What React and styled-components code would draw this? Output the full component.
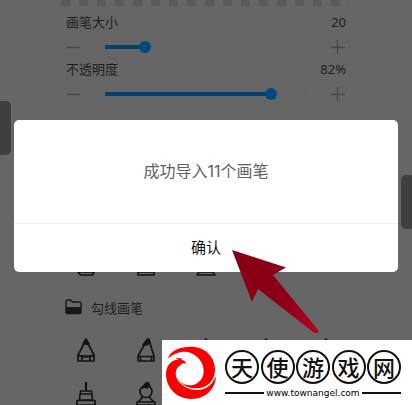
import React, { useState } from "react";
import styled, { createGlobalStyle } from "styled-components";

const GlobalStyle = createGlobalStyle`
  * { box-sizing: border-box; }
  body {
    margin: 0;
    background: #666;
    font-family: "Noto Sans", "Noto Sans CJK SC", sans-serif;
    color: #1e1e1e;
  }
  button { font: inherit; border: 0; padding: 0; background: none; color: inherit; }
`;

const Screen = styled.div`
  position: relative;
  height: 100vh;
  overflow: hidden;
  background: #666;
`;

const Panel = styled.main`
  width: 280px;
  margin: 0 auto;
`;

const PreviewStrip = styled.div`
  height: 6px;
  margin: 0 -4px 7px -5px;
  background: repeating-linear-gradient(90deg, #5b5b5b 0 9px, transparent 9px 18px);
`;

const Setting = styled.section`
  padding-bottom: 5px;
`;

const SettingHead = styled.div`
  display: flex;
  justify-content: space-between;
  height: 18px;
  margin-bottom: 8px;
  font-size: 13px;
  line-height: 18px;
`;

const SettingControls = styled.div`
  display: grid;
  grid-template-columns: 16px 1fr 16px;
  column-gap: 17px;
  align-items: center;
  height: 16px;
`;

const StepButton = styled.button`
  display: flex;
  height: 16px;
  color: #484848;
`;

const Slider = styled.input`
  appearance: none;
  width: 100%;
  height: 12px;
  margin: 0;
  background: linear-gradient(#00416f, #00416f) 6px 50% / calc((100% - 12px) * ${(p) => p.value / 100}) 4px no-repeat,
    linear-gradient(#646464, #646464) 50% 50% / calc(100% - 12px) 4px no-repeat;

  &::-webkit-slider-thumb {
    appearance: none;
    width: 12px;
    height: 12px;
    border-radius: 50%;
    background: #004a80;
  }
`;

const BrushLibrary = styled.section`
  margin: 135px -10px 0;
`;

const BrushRow = styled.div`
  display: grid;
  grid-template-columns: repeat(5, 1fr);
  height: 44px;
`;

const BrushButton = styled.button`
  display: flex;
  align-items: center;
  justify-content: center;
  color: #141414;
`;

const GroupHeader = styled.h2`
  display: flex;
  align-items: center;
  gap: 9px;
  height: 42px;
  margin: 0;
  padding-left: 9px;
  font-size: 13px;
  font-weight: 400;
`;

const SideHandle = styled.button`
  position: absolute;
  top: ${(p) => (p.$side === "left" ? 101 : 175)}px;
  ${(p) => p.$side}: 0;
  width: 11px;
  height: 54px;
  background: #3f3f3f;
  border-radius: ${(p) => (p.$side === "left" ? "0 5px 5px 0" : "5px 0 0 5px")};
`;

const Dialog = styled.div`
  position: absolute;
  top: 120px;
  left: 14px;
  right: 14px;
  border-radius: 5px;
  background: #fff;
  overflow: hidden;
`;

const DialogMessage = styled.p`
  margin: 0;
  padding: 39px 16px 40px;
  border-bottom: 1px solid #f0f0f0;
  text-align: center;
  font-family: Inter, "Noto Sans CJK SC", sans-serif;
  font-size: 16px;
  line-height: 24px;
  color: #626262;
`;

const ConfirmButton = styled.button`
  display: block;
  width: 100%;
  height: 48px;
  padding-bottom: 3px;
  font-size: 15px;
  color: #111;
`;

const Pointer = styled.svg`
  position: absolute;
  top: 248px;
  left: 230px;
`;

const Watermark = styled.a`
  position: absolute;
  right: 0;
  bottom: 0;
  display: flex;
  gap: 5px;
  width: 250px;
  height: 65px;
  padding-top: 1px;
  background: #fff;
  color: #111;
  text-decoration: none;
`;

const SiteInfo = styled.div`
  width: 176px;
  padding-top: 9px;
`;

const SiteName = styled.div`
  display: flex;
  justify-content: space-between;
`;

const Glyph = styled.span`
  width: 34px;
  height: 34px;
  border: 2px solid #111;
  border-radius: 50%;
  text-align: center;
  font-family: "Noto Sans CJK SC", sans-serif;
  font-size: 22px;
  font-weight: 500;
  line-height: 29px;
`;

const SiteUrl = styled.div`
  display: flex;
  align-items: center;
  gap: 2px;
  font-family: "DejaVu Sans", sans-serif;
  font-size: 9px;
  line-height: 18px;
  color: #000;

  &::before, &::after {
    content: "";
    flex: 1;
    height: 2px;
    background: #111;
  }
`;

const StepIcon = ({ plus }) => (
  <svg width="16" height="16" viewBox="0 0 16 16" stroke="currentColor" strokeWidth="1.300" aria-hidden="true">
    <path d={plus ? "M1 8.5H15M7.5 1V15" : "M1 8.5H14"} />
  </svg>
);

const FolderIcon = () => (
  <svg width="17" height="16" viewBox="0 0 17 16" aria-hidden="true">
    <path d="M1 13V2.500Q1 1 2.500 1H5.500L7.500 3H14.500Q16 3 16 4.500V13Q16 14.500 15 14.500H2Q1 14.500 1 13Z" fill="none" stroke="#181818" strokeWidth="1.400" />
    <path d="M1 8H16V13Q16 15 14.500 15H2.500Q1 15 1 13Z" fill="#181818" />
  </svg>
);

const brushShapes = {
  pencil: (
    <>
      <path d="M12 2L4 17V23H20V17ZM4 18H20M8 18V23M16 18V23" />
      <path d="M4 17Q12 21 20 17" />
      <path d="M12 1L9 6.500L11 5.500L13 6.500L15 6Z" fill="currentColor" />
    </>
  ),
  slanted: (
    <>
      <path d="M13 2L4 18V23H20V18L15 2ZM4 18.500H20M6.500 19V23M17.500 19V23" />
      <path d="M13.500 1L9 7L11 6.500L13 7L14 5L16 6L15 1Z" fill="currentColor" />
    </>
  ),
  liner: (
    <>
      <path d="M12 0V9" strokeWidth="2.200" />
      <path d="M6.500 9H17.500V12H6.500ZM6 12L5.500 18H18.500L18 12M3 18.500H21V23H3Z" />
    </>
  ),
  round: (
    <>
      <circle cx="12" cy="9.500" r="6" />
      <path d="M8 14.500V16L4 20H20L16 16V14.500M3 20H21V23H3Z" />
      <path d="M12 1L8 6L11 5L13 6L14 4L16 5L14 0Z" fill="currentColor" />
    </>
  ),
  cup: <path d="M6 3H18L20 20L18.500 23H6.500L4 20ZM4.500 20H19.500" />,
  block: <path d="M6 3H18L20 20V23H4V20ZM4 20H20" />,
  wide: <path d="M8 3H16L19 20L21 23H3L5 20ZM5 20H19" />,
  tip: <path d="M9 3H13L15 20L13 22H9L7 20Z" />,
};

const BrushIcon = ({ shape }) => (
  <svg width="24" height="24" viewBox="0 0 24 24" fill="none" stroke="currentColor" strokeWidth="1.700" strokeLinejoin="round" aria-hidden="true">
    {brushShapes[shape]}
  </svg>
);

const PhoenixLogo = () => (
  <svg width="58" height="62" viewBox="0 0 174 186" fill="#fb0000" aria-hidden="true">
    <path d="M17 52C28 27 55 17 86 17C130 17 159 48 159 86C159 118 136 142 103 142C83 142 63 134 50 119C65 131 82 136 96 131C116 124 126 107 125 87C123 54 93 31 65 32C45 33 31 42 17 52Z" />
    <path d="M40 50C48 52 55 50 61 53L58 57C66 57 70 61 73 69C66 65 60 66 57 71C46 77 41 86 41 99C43 127 76 149 108 147C136 145 151 130 162 106C160 145 130 174 88 174C44 174 12 140 12 99C12 75 27 56 49 56Z" />
  </svg>
);

const BrushSetting = ({ label, unit = "", initial }) => {
  const [value, setValue] = useState(initial);
  const change = (next) => setValue(Math.min(100, Math.max(0, next)));
  const id = unit ? "opacity" : "size";
  return (
    <Setting>
      <SettingHead>
        <label htmlFor={id}>{label}</label>
        <output htmlFor={id}>{value}{unit}</output>
      </SettingHead>
      <SettingControls>
        <StepButton aria-label={`${label} -`} onClick={() => change(value - 1)}><StepIcon /></StepButton>
        <Slider id={id} type="range" min="0" max="100" value={value} onChange={(e) => change(Number(e.target.value))} />
        <StepButton aria-label={`${label} +`} onClick={() => change(value + 1)}><StepIcon plus /></StepButton>
      </SettingControls>
    </Setting>
  );
};

const Brushes = ({ shapes }) => (
  <BrushRow>
    {shapes.map((shape, i) => (
      <BrushButton key={i} aria-label={`画笔 ${i + 1}`}><BrushIcon shape={shape} /></BrushButton>
    ))}
  </BrushRow>
);

export default function App() {
  return (
    <>
      <GlobalStyle />
      <Screen>
        <Panel>
          <PreviewStrip />
          <BrushSetting label="画笔大小" initial={20} />
          <BrushSetting label="不透明度" unit="%" initial={82} />
          <BrushLibrary>
            <Brushes shapes={["cup", "block", "wide", "tip"]} />
            <GroupHeader><FolderIcon />勾线画笔</GroupHeader>
            <Brushes shapes={["pencil", "slanted", "pencil", "pencil", "pencil"]} />
            <Brushes shapes={["liner", "round"]} />
          </BrushLibrary>
        </Panel>
        <SideHandle $side="left" aria-label="左侧栏" />
        <SideHandle $side="right" aria-label="右侧栏" />
        <Dialog role="dialog" aria-modal="true" aria-labelledby="import-message">
          <DialogMessage id="import-message">成功导入11个画笔</DialogMessage>
          <ConfirmButton>确认</ConfirmButton>
        </Dialog>
        <Pointer width="92" height="88" viewBox="0 0 92 88" aria-hidden="true">
          <defs>
            <linearGradient id="pointerFill" x1="0" y1="0" x2="1" y2="1">
              <stop offset="0" stopColor="#860014" />
              <stop offset="0.6" stopColor="#8c0016" />
              <stop offset="1" stopColor="#b8001e" />
            </linearGradient>
          </defs>
          <path d="M2 2L56 19.500L43 27L88 82Q89 85 86 85L83 84L28 41L22 54Z" fill="url(#pointerFill)" />
        </Pointer>
        <Watermark href="#">
          <PhoenixLogo />
          <SiteInfo>
            <SiteName>
              {[..."天使游戏网"].map((c) => <Glyph key={c}>{c}</Glyph>)}
            </SiteName>
            <SiteUrl>www.townangel.com</SiteUrl>
          </SiteInfo>
        </Watermark>
      </Screen>
    </>
  );
}
